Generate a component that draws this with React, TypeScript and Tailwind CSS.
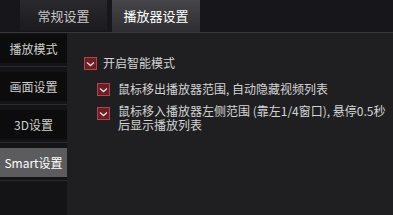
import React from 'react'

const font = { fontFamily: '"Noto Sans CJK SC", "Liberation Sans", sans-serif' }

function Check({ className = '' }: { className?: string }) {
  return (
    <span className={`flex h-[13px] w-[13px] shrink-0 items-center justify-center border border-[#b4434a] bg-[#6a1f25] ${className}`}>
      <svg width="9" height="7" viewBox="0 0 9 7">
        <path d="M1 2.5 L4.5 5.5 L8 2.5" fill="none" stroke="#f0d8d8" strokeWidth="1.4" />
      </svg>
    </span>
  )
}

const side = ['播放模式', '画面设置', '3D设置', 'Smart设置']

export default function App() {
  return (
    <div className="flex h-[215px] w-[393px] flex-col overflow-hidden bg-[#1f1f22] text-[12px] text-[#d4d4d4]" style={font}>
      {/* tabs */}
      <div className="flex h-[33px] shrink-0 border-b border-[#38383c] bg-[#17171b]">
        <div className="ml-[20px] flex h-[31px] w-[87px] items-center justify-center bg-gradient-to-b from-[#2a2a2e] to-[#1b1b1f] text-[13px] text-[#c8c8c8]">
          常规设置
        </div>
        <div className="ml-[5px] flex h-[32px] w-[88px] items-center justify-center bg-gradient-to-b from-[#46464a] to-[#2e2e32] text-[13px] text-white">
          播放器设置
        </div>
      </div>

      <div className="flex flex-1">
        {/* sidebar */}
        <div className="flex w-[67px] shrink-0 flex-col bg-[#141416] pt-[1px]">
          {side.map((s, i) => (
            <div key={s} className="flex flex-col">
              <div
                className={`flex h-[29px] items-center justify-center ${
                  i === 3 ? 'bg-[#5c5c5e] text-white' : 'bg-[#0c0c0d] text-[#cfcfcf]'
                }`}
              >
                {s}
              </div>
              <div className="mt-[3px] h-[6px] border-t border-[#2c2c2e]" />
            </div>
          ))}
        </div>

        {/* content */}
        <div className="flex flex-col pl-[17px] pt-[21px]">
          <div className="flex items-center gap-[6px]">
            <Check />
            <span>开启智能模式</span>
          </div>
          <div className="mt-[8px] flex items-center gap-[8px] pl-[13px]">
            <Check />
            <span>鼠标移出播放器范围, 自动隐藏视频列表</span>
          </div>
          <div className="mt-[6px] flex items-start gap-[8px] pl-[13px]">
            <Check className="mt-[3px]" />
            <div className="flex flex-col leading-[14px]">
              <span className="whitespace-nowrap">鼠标移入播放器左侧范围 (靠左1/4窗口), 悬停0.5秒</span>
              <span>后显示播放列表</span>
            </div>
          </div>
        </div>
      </div>
    </div>
  )
}
